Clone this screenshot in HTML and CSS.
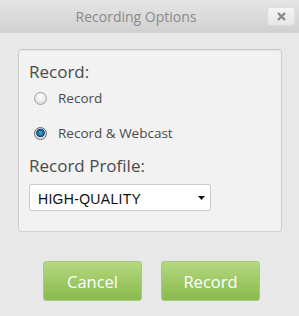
FILE: index.html
```html
<!DOCTYPE html>
<html>
<head>
<meta charset="utf-8">
<link rel="stylesheet" href="styles.css">
</head>
<body>
<div class="dialog">
  <div class="header">
    <div class="title">Recording Options</div>
    <button class="close" aria-label="Close">
      <svg width="9" height="9" viewBox="0 0 9 9"><path d="M1 1 L8 8 M8 1 L1 8" stroke="#8a8a8a" stroke-width="2.4" stroke-linecap="butt"/></svg>
    </button>
  </div>
  <div class="panel">
    <div class="heading">Record:</div>
    <label class="row"><input type="radio" name="rec" class="radio"><span>Record</span></label>
    <label class="row row2"><input type="radio" name="rec" class="radio" checked><span>Record &amp; Webcast</span></label>
    <div class="heading heading2">Record Profile:</div>
    <div class="select">
      <span class="select-text">HIGH-QUALITY</span>
      <svg class="arrow" width="7" height="4" viewBox="0 0 7 4"><polygon points="0,0 7,0 3.5,4" fill="#111"/></svg>
    </div>
  </div>
  <div class="actions">
    <button class="btn">Cancel</button>
    <button class="btn">Record</button>
  </div>
</div>
</body>
</html>
```

FILE: styles.css
```css
html, body {
  margin: 0;
  padding: 0;
  background: #e8e8e8;
}
body {
  font-family: "Open Sans", "Liberation Sans", sans-serif;
  width: 299px;
  height: 316px;
  overflow: hidden;
}
.dialog {
  display: flex;
  flex-direction: column;
}
.header {
  height: 33px;
  display: flex;
  align-items: flex-start;
  background: linear-gradient(#e5e5e5, #d0d0d0);
  padding-right: 4px;
}
.title {
  flex: 1;
  padding-left: 5px;
  text-align: center;
  font-size: 14px;
  line-height: 33px;
  color: #8a8a8a;
}
.close {
  margin-top: 7px;
  width: 28px;
  height: 19px;
  padding: 0;
  border: 1px solid #dcdcdc;
  border-radius: 3px;
  background: linear-gradient(#f5f5f5, #e6e6e6);
  display: flex;
  align-items: center;
  justify-content: center;
}
.panel {
  margin: 16px 17px 0 18px;
  padding: 10px 10px 20px 10px;
  background: #f2f2f2;
  border: 1px solid #d0d0d0;
  border-top-color: #c6c6c6;
  border-radius: 4px;
  box-shadow: inset 0 1px 1px rgba(0,0,0,0.05);
  display: flex;
  flex-direction: column;
  align-items: flex-start;
  color: #4a4a4a;
}
.heading {
  font-size: 17px;
  line-height: 23px;
}
.heading2 {
  margin-top: 10px;
}
.row {
  margin-top: 4px;
  height: 22px;
  display: flex;
  align-items: center;
  font-size: 13.5px;
  line-height: 22px;
}
.row2 {
  margin-top: 13px;
}
.radio {
  appearance: none;
  -webkit-appearance: none;
  margin: 0 11px 0 5px;
  width: 13px;
  height: 13px;
  border-radius: 50%;
  border: 1px solid #a0a0a0;
  background: radial-gradient(circle at 50% 35%, #ffffff 0%, #e8e8e8 55%, #cfcfcf 100%);
  box-sizing: border-box;
}
.radio:checked {
  border-color: #6a6a6a;
  background: radial-gradient(circle at 50% 45%, #4fa6dc 0%, #1b6aa6 35%, #0d3f66 48%, #d8d8d8 56%, #f4f4f4 80%, #c8c8c8 100%);
}
.select {
  margin-top: 7px;
  width: 182px;
  height: 27px;
  box-sizing: border-box;
  border: 1px solid #cdcdcd;
  border-radius: 2px;
  background: #fff;
  display: flex;
  align-items: center;
  padding: 2px 5px 0 8px;
}
.select-text {
  flex: 1;
  font-family: "Liberation Sans", Arial, sans-serif;
  font-size: 14px;
  letter-spacing: 0.3px;
  color: #111;
}
.arrow {
  display: block;
  margin-top: -1px;
}
.actions {
  display: flex;
  gap: 19px;
  padding-left: 43px;
  margin-top: 29px;
}
.btn {
  width: 99px;
  height: 40px;
  box-sizing: border-box;
  border: 1px solid #a6cb78;
  border-radius: 3px;
  background: linear-gradient(#b3d87e, #8aba4f);
  color: #fff;
  font-family: "Open Sans", sans-serif;
  font-size: 16.5px;
  padding: 0;
}
```
